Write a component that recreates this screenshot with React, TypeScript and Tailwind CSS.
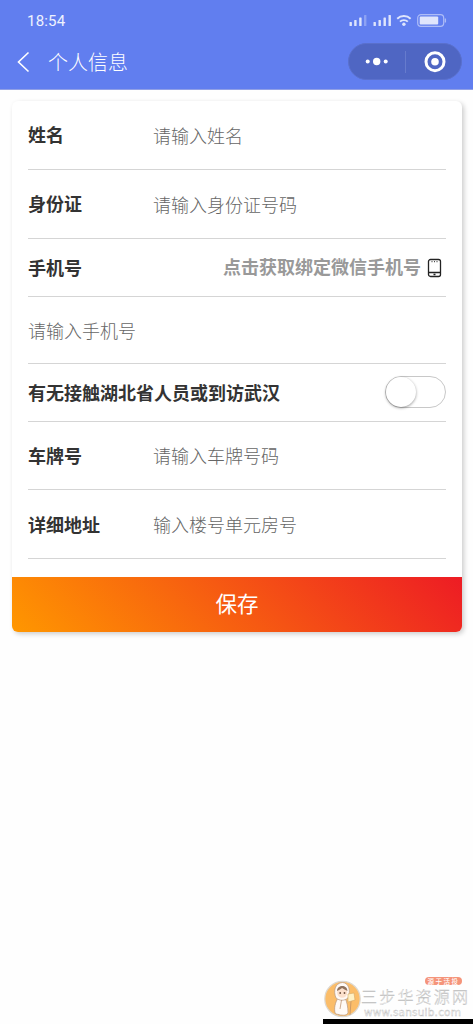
import { useState } from "react";

const LABEL = "text-[18px] font-bold text-[#333]";
const INPUT = "min-w-0 flex-1 bg-transparent text-[18px] font-light text-[#333] outline-none placeholder:text-[#666]";

function StatusIcons() {
  return (
    <svg width="100" height="16" viewBox="0 0 100 16" className="text-white/80">
      <g fill="currentColor">
        <rect x="1.5" y="9" width="2.4" height="4" rx="0.6" />
        <rect x="6.2" y="7" width="2.4" height="6" rx="0.6" />
        <rect x="11.2" y="4.5" width="2.4" height="8.5" rx="0.6" />
        <rect x="16" y="2" width="2.4" height="11" rx="0.6" opacity="0.35" />
        <rect x="25.5" y="9" width="2.4" height="4" rx="0.6" />
        <rect x="30.5" y="7" width="2.4" height="6" rx="0.6" />
        <rect x="35.5" y="4.5" width="2.4" height="8.5" rx="0.6" />
        <rect x="40.5" y="2" width="2.4" height="11" rx="0.6" />
        <circle cx="55.9" cy="11.2" r="1.7" />
      </g>
      <g fill="none" stroke="currentColor" strokeWidth="1.9">
        <path d="M49.2 5.7a9.6 9.6 0 0 1 13.4 0" />
        <path d="M52 8.7a5.5 5.5 0 0 1 7.8 0" />
      </g>
      <rect x="69.7" y="1.7" width="26" height="11.6" rx="3.3" fill="none" stroke="currentColor" strokeWidth="1.2" opacity="0.6" />
      <rect x="71.7" y="3.6" width="18.5" height="7.8" rx="1" fill="currentColor" />
      <path d="M97.4 5.5v4" stroke="currentColor" strokeWidth="1.3" opacity="0.6" />
    </svg>
  );
}

function Header() {
  return (
    <header className="h-[90px] border-b border-[#91a0e6] bg-[#617eef] text-white">
      <div className="flex h-[42px] items-center justify-between pr-[25px] pl-[27px]">
        <span className="font-['Roboto'] text-[15px] tracking-[0.2px] text-white/90">18:54</span>
        <StatusIcons />
      </div>
      <div className="flex h-[39px] items-center pr-[11px] pl-[17px]">
        <svg width="13" height="22" viewBox="0 0 13 22" fill="none" stroke="currentColor" strokeWidth="1.6">
          <path d="M11.5 1.5 1.5 11l10 9.5" />
        </svg>
        <h1 className="ml-[18px] text-[20px] leading-none font-light">个人信息</h1>
        <div className="ml-auto flex h-[37px] w-[114px] items-center rounded-full border border-[#5a70cc] bg-[#4f66c3]">
          <svg width="112" height="36" viewBox="0 0 112 36" fill="currentColor">
            <circle cx="18.7" cy="17.5" r="2" />
            <circle cx="27.7" cy="17.5" r="3.7" />
            <circle cx="36.7" cy="17.5" r="2" />
            <path d="M56.5 7v22" stroke="#667bcd" />
            <circle cx="86" cy="17.7" r="9" fill="none" stroke="currentColor" strokeWidth="3" />
            <circle cx="86" cy="17.7" r="3.8" />
          </svg>
        </div>
      </div>
    </header>
  );
}

function Watermark() {
  return (
    <div className="flex h-[48px] w-[150px] border-b-[5px] border-black">
      <svg width="38" height="38" viewBox="0 0 38 38" className="mt-[4px] shrink-0">
        <circle cx="19.5" cy="19" r="17.7" fill="#fbbd69" stroke="#ddd8d0" strokeWidth="1.2" />
        <path d="M15 18c-3 5-4 10-3 15 2 2 4 1 5 2 3 0 6 1 8-2 0-6-1-11-3-15z" fill="#fffaf6" stroke="#b59a87" strokeWidth="0.7" />
        <path d="M13 18C10 11 12 3 19.5 2.5 26 3 28 11 25 18c-4 3-8 3-12 0z" fill="#fffaf6" stroke="#b59a87" strokeWidth="0.7" />
        <ellipse cx="19.2" cy="12.5" rx="5" ry="5.3" fill="#fbe0cc" />
        <path d="M14 11c0-6 10-7 10.5 0-2-1-4-2-5.5-3-1 1-3 2-5 3z" fill="#8f725d" />
        <circle cx="17.2" cy="13" r="0.9" fill="#70513f" />
        <circle cx="21.5" cy="13" r="0.9" fill="#70513f" />
        <path d="m18.5 20-1.5 9M28 21l-1 14" fill="none" stroke="#b78b67" strokeWidth="0.7" />
        <path d="m25 14 6-1 1 7-7 2z" fill="#fff1c5" stroke="#d5a765" strokeWidth="0.6" />
      </svg>
      <div className="flex w-[112px] flex-col">
        <span className="mt-px mr-[11px] flex h-[8px] w-[37px] items-center justify-center self-end rounded-[4px] bg-[#f5947a] text-[6.5px] leading-[8px] font-medium tracking-[1.5px] text-white">
          源于活投
        </span>
        <span className="mt-[2px] h-[19px] text-[16px] leading-[19px] font-light tracking-[2.2px] whitespace-nowrap text-white [-webkit-text-stroke:0.4px_#bbb]">
          三步华资源网
        </span>
        <span className="h-[12px] pl-[3px] font-['DejaVu_Sans'] text-[10.5px] leading-[12px] tracking-[0.2px] whitespace-nowrap text-white [-webkit-text-stroke:0.4px_#bbb]">
          www.sansuib.com
        </span>
      </div>
    </div>
  );
}

export default function App() {
  const [contact, setContact] = useState(false);

  return (
    <div className="flex h-[1024px] w-[473px] flex-col bg-[#fefefe] font-['Noto_Sans_CJK_SC','Noto_Sans',sans-serif]">
      <Header />
      <main className="mt-[11px] ml-[12px] flex w-[450px] flex-col overflow-hidden rounded-[6px] bg-white shadow-[2px_2px_5px_rgba(0,0,0,0.2)]">
        <div className="mx-4 flex flex-col">
          <label className="flex h-[69px] items-center border-b border-[#d5d5d5]">
            <span className={`${LABEL} mb-[2px] w-[125px]`}>姓名</span>
            <input className={INPUT} placeholder="请输入姓名" />
          </label>
          <label className="flex h-[69px] items-center border-b border-[#d5d5d5]">
            <span className={`${LABEL} mb-[2px] w-[125px]`}>身份证</span>
            <input className={INPUT} placeholder="请输入身份证号码" />
          </label>
          <div className="flex h-[58px] items-center border-b border-[#d5d5d5]">
            <span className={LABEL}>手机号</span>
            <button className="ml-auto flex items-center pr-[4px] text-[18px] font-bold text-[#999]" type="button">
              <span className="mb-[3px]">点击获取绑定微信手机号</span>
              <svg width="15" height="20" viewBox="0 0 15 20" className="ml-[6px]" fill="none" stroke="#222" strokeWidth="1.3">
                <rect x="1.5" y="1.5" width="12" height="17" rx="2" />
                <path d="M1.5 14.5h12M6.5 16.5h2" />
                <path d="M4.500 3.700h6" strokeDasharray="1 1.500" strokeWidth="1" />
              </svg>
            </button>
          </div>
          <div className="flex h-[67px] items-center border-b border-[#d5d5d5]">
            <input className={INPUT} placeholder="请输入手机号" />
          </div>
          <div className="flex h-[58px] items-center justify-between border-b border-[#d5d5d5]">
            <span className={LABEL}>有无接触湖北省人员或到访武汉</span>
            <button
              className="mb-[2px] flex h-[32px] w-[61px] items-center rounded-full border border-[#c8c8c8] bg-white aria-checked:justify-end aria-checked:bg-green-500"
              role="switch"
              aria-checked={contact}
              onClick={() => setContact(!contact)}
              type="button"
            >
              <span className="size-[30px] rounded-full bg-white shadow-[0_1px_3px_rgba(0,0,0,0.4)]" />
            </button>
          </div>
          <label className="flex h-[68px] items-center border-b border-[#d5d5d5]">
            <span className={`${LABEL} w-[125px]`}>车牌号</span>
            <input className={INPUT} placeholder="请输入车牌号码" />
          </label>
          <label className="flex h-[69px] items-center border-b border-[#d5d5d5]">
            <span className={`${LABEL} w-[125px]`}>详细地址</span>
            <input className={INPUT} placeholder="输入楼号单元房号" />
          </label>
        </div>
        <button
          className="mt-[18px] h-[55px] bg-[linear-gradient(45deg,#ff9700,#ed1c24)] pb-[2px] text-[21.5px] text-white"
          type="button"
        >
          保存
        </button>
      </main>
      <div className="mt-auto flex justify-end">
        <Watermark />
      </div>
    </div>
  );
}
